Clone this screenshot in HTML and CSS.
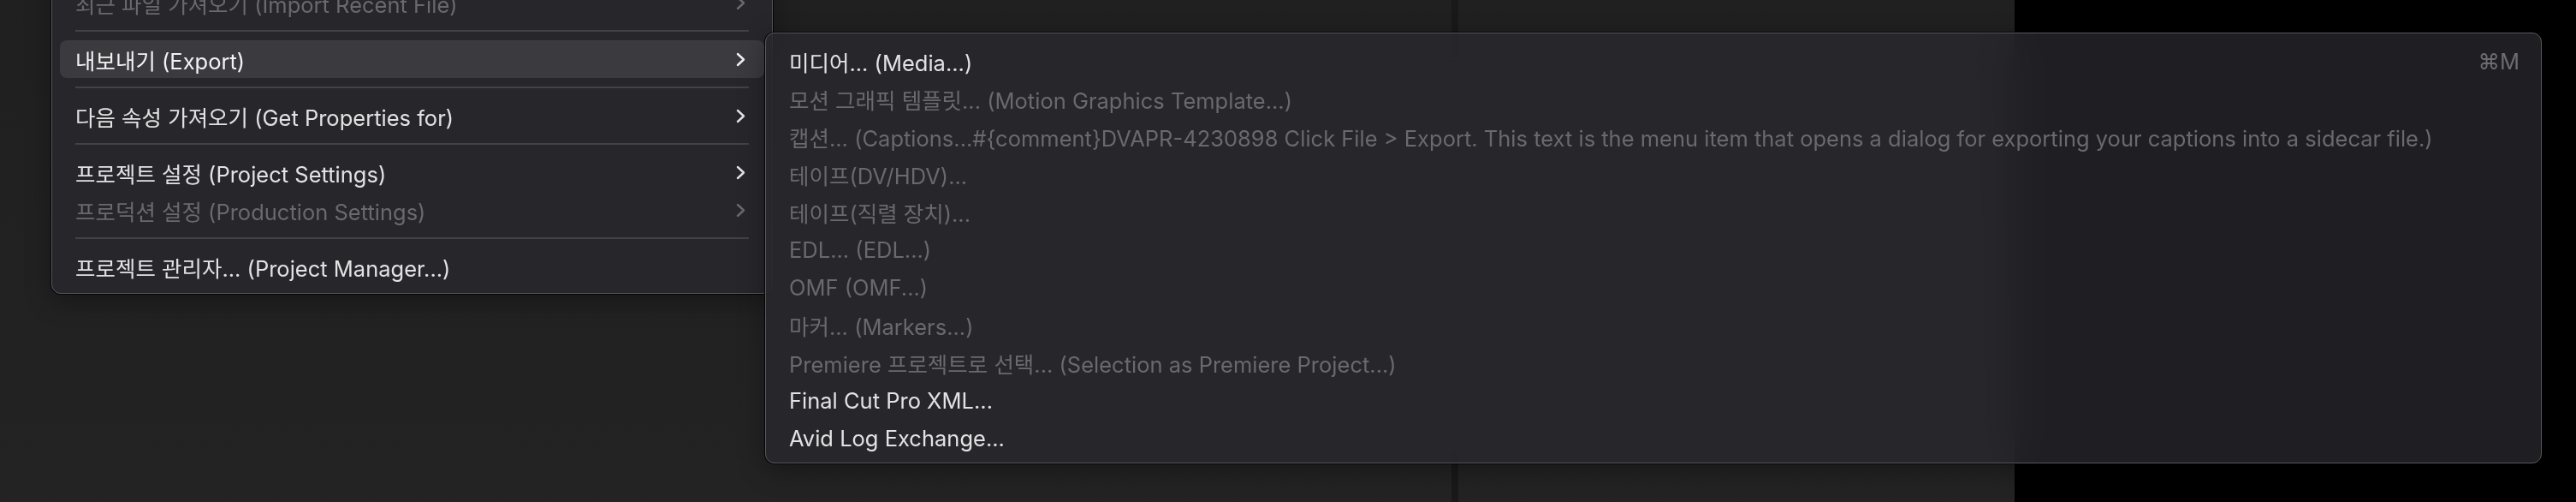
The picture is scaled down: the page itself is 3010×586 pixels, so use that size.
FILE: index.html
```html
<!DOCTYPE html>
<html lang="ko">
<head>
  <meta charset="UTF-8" />
  <title>내보내기 메뉴</title>
  <link rel="stylesheet" href="styles.css">
</head>
<body>

  <div class="desk">
    <div class="pane"></div>
    <div class="divider"></div>
    <div class="pane"></div>
    <div class="void"></div>
  </div>

  <!-- file menu (top cut off by the window) -->
  <ul class="menu file-menu">
    <li class="item off">최근 파일 가져오기 (Import Recent File)
      <svg class="chev" viewBox="0 0 11 17"><path d="M2 2 L9 8.5 L2 15"/></svg>
    </li>
    <li class="sep"></li>
    <li class="item active">내보내기 (Export)
      <svg class="chev" viewBox="0 0 11 17"><path d="M2 2 L9 8.5 L2 15"/></svg>
    </li>
    <li class="sep"></li>
    <li class="item">다음 속성 가져오기 (Get Properties for)
      <svg class="chev" viewBox="0 0 11 17"><path d="M2 2 L9 8.5 L2 15"/></svg>
    </li>
    <li class="sep"></li>
    <li class="item">프로젝트 설정 (Project Settings)
      <svg class="chev" viewBox="0 0 11 17"><path d="M2 2 L9 8.5 L2 15"/></svg>
    </li>
    <li class="item off">프로덕션 설정 (Production Settings)
      <svg class="chev" viewBox="0 0 11 17"><path d="M2 2 L9 8.5 L2 15"/></svg>
    </li>
    <li class="sep"></li>
    <li class="item">프로젝트 관리자... (Project Manager...)</li>
  </ul>

  <!-- export submenu -->
  <ul class="menu export-menu">
    <li class="item">미디어... (Media...) <span class="key">⌘M</span></li>
    <li class="item off">모션 그래픽 템플릿... (Motion Graphics Template...)</li>
    <li class="item off">캡션... (Captions...#{comment}DVAPR-4230898 Click File &gt; Export. This text is the menu item that opens a dialog for exporting your captions into a sidecar file.)</li>
    <li class="item off">테이프(DV/HDV)...</li>
    <li class="item off">테이프(직렬 장치)...</li>
    <li class="item off">EDL... (EDL...)</li>
    <li class="item off">OMF (OMF...)</li>
    <li class="item off">마커... (Markers...)</li>
    <li class="item off">Premiere 프로젝트로 선택... (Selection as Premiere Project...)</li>
    <li class="item">Final Cut Pro XML...</li>
    <li class="item">Avid Log Exchange...</li>
  </ul>

</body>
</html>
```

FILE: styles.css
```css
body {
  margin: 0;
  width: 3010px;
  height: 586px;
  overflow: hidden;
  position: relative;
  background: #000;
  font-family: 'Inter', 'Noto Sans CJK KR', 'DejaVu Sans', sans-serif;
  font-size: 25.5px;
  color: #e2e2e4;
}
.desk {
  display: grid;
  grid-template-columns: 1696px 8px 650px 1fr;
  height: 586px;
}
.pane {
  background: linear-gradient(180deg, #202020, #232323);
}
.divider {
  background: #191919;
}
.void {
  background: #000;
}

.menu {
  position: absolute;
  list-style: none;
  margin: 0;
  box-sizing: border-box;
  border: 1px solid #57565b;
  border-radius: 11px;
  background: rgba(42, 41, 46, 0.74);
  backdrop-filter: blur(28px);
  box-shadow: 0 0 0 1px rgba(0, 0, 0, 0.85), 0 8px 30px rgba(0, 0, 0, 0.35);
}
.file-menu {
  left: 60px;
  top: -30px;
  width: 843px;
  padding: 10px 9px 9px;
}
.export-menu {
  left: 894px;
  top: 38px;
  width: 2076px;
  padding: 10px 9px 7px;
}

.item {
  display: flex;
  align-items: center;
  height: 44px;
  padding: 0 22px 0 18px;
  border-radius: 8px;
  white-space: nowrap;
}
.export-menu .item {
  padding-right: 16px;
}
.item.off {
  color: #6a696e;
}
.item.active {
  background: #3b3a3f;
  color: #f2f2f3;
}
.chev {
  width: 11px;
  height: 17px;
  margin-left: auto;
  fill: none;
  stroke: currentColor;
  stroke-width: 2.4;
  stroke-linecap: round;
  stroke-linejoin: round;
}
.key {
  margin-left: auto;
  color: #6d6c71;
}
.sep {
  height: 2px;
  margin: 10px 18px;
  background: #434247;
}
```
